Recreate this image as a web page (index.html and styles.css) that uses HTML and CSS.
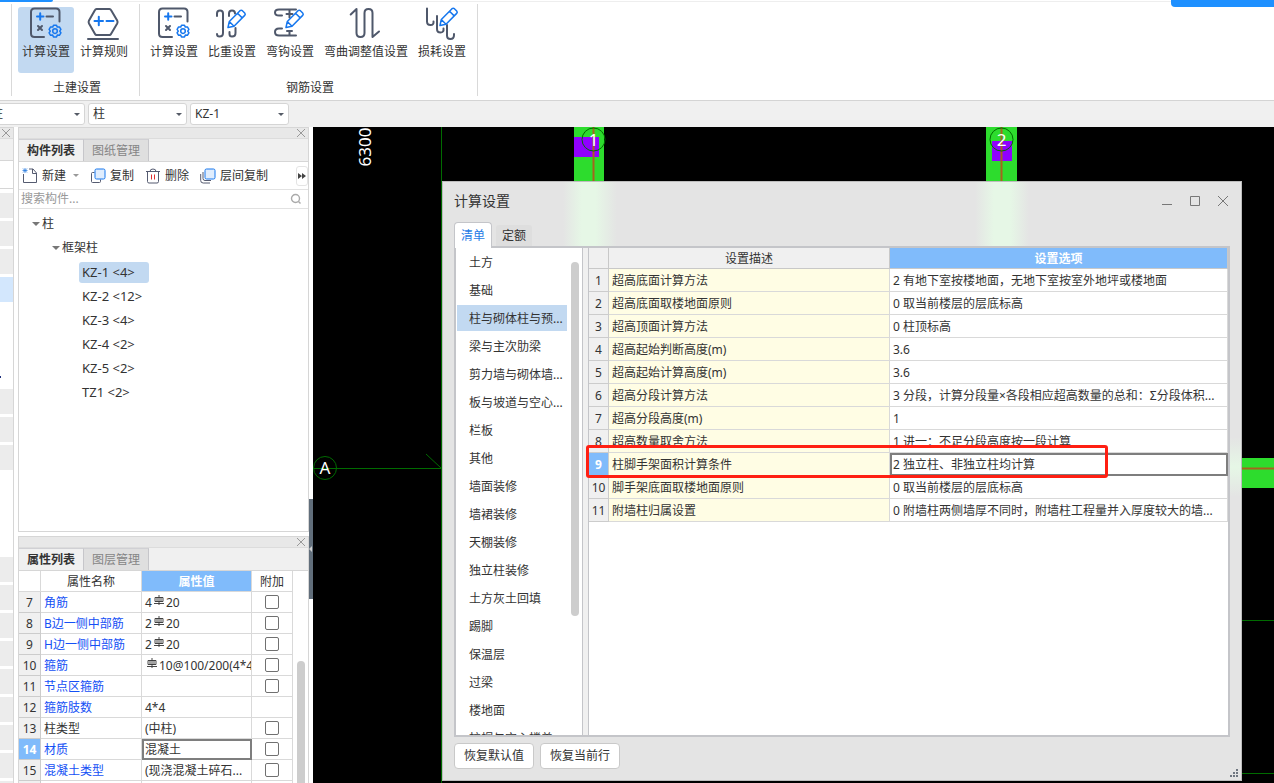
FILE: index.html
```html
<!DOCTYPE html>
<html lang="zh-CN">
<head>
<meta charset="utf-8">
<title>计算设置</title>
<link rel="stylesheet" href="styles.css">
</head>
<body>
<svg class="defs" aria-hidden="true">
  <symbol id="pencil" viewBox="0 0 32 34">
    <path class="pen" d="M12 20.500l1.300-6L24 3.700q1.200-1 2.400 0l2.300 2.300q1.100 1.200 0 2.400L18 19.200zM21.500 6.200l4.700 4.700M13.300 14.500l4.700 4.700"/>
  </symbol>
  <symbol id="calc" viewBox="0 0 32 34">
    <path class="dark" d="M29.500 14.500V5q0-3.500-3.500-3.500H4.500Q1 1.500 1 5v21.500Q1 30 4.500 30H14"/>
    <path class="dark" d="M16.500 9.500H23M8 19l4 4M12 19l-4 4"/>
    <path class="blue" d="M7 9.500h6.500M10.200 6.200v6.600"/>
    <path class="pen" d="M23.500 18.200h3l.8 1.900 2.100-.2 1.500 2.500-1.200 1.700 1.200 1.700-1.500 2.500-2.100-.2-.8 1.900h-3l-.8-1.900-2.100.2-1.500-2.500 1.200-1.700-1.200-1.700 1.500-2.500 2.100.2z"/>
    <circle class="pen" cx="25" cy="24.100" r="2.300"/>
  </symbol>
</svg>

<header class="ribbon">
  <span class="edge-left"></span><span class="edge-right"></span>
  <section class="group stub"></section>
  <section class="group">
    <div class="tools">
      <button class="tool active"><svg class="big"><use href="#calc"/></svg>计算设置</button>
      <button class="tool"><svg class="big" viewBox="0 0 32 34">
        <path class="dark" d="M8.500 2h13q1 0 1.500 1l6.200 10.500q.8 1.500 0 3L23 27q-.5 1-1.500 1h-13Q7.500 28 7 27L1 16.500q-.8-1.500 0-3L7 3q.5-1 1.500-1zM0 32h30"/>
        <path class="blue" d="M6.500 14h8.500M10.800 9.700v8.600M18.500 14h7"/></svg>计算规则</button>
    </div>
    <h2>土建设置</h2>
  </section>
  <section class="group">
    <div class="tools">
      <button class="tool"><svg class="big"><use href="#calc"/></svg>计算设置</button>
      <button class="tool"><svg class="big" viewBox="0 0 32 34">
        <path class="dark" d="M1 9V6.500q0-3 3-3t3 3V26q0 3.500-3.500 3.500Q1 29.500 1 27M13 9V6.500q0-3 3-3t3 3M19.500 21v5q0 3.500-3.500 3.500-2.500 0-2.500-2.500v-2"/>
        <use href="#pencil"/></svg>比重设置</button>
      <button class="tool"><svg class="big" viewBox="0 0 32 34">
        <path class="dark" d="M22 2.500H5Q1 2.500 1 5.500t4 3h3M15.500 2.500v8M12.500 7h6M8 21.500H5q-4 0-4 3.500t4 3.500h17M15.500 24.500v4M13 24h5"/>
        <use href="#pencil"/></svg>弯钩设置</button>
      <button class="tool wide"><svg class="big" viewBox="0 0 32 34">
        <path class="dark" d="M.700 7.500L6.500 2v24q0 4 4 4t4-4V6q0-4 4-4t4 4v24l6.500-5.500"/></svg>弯曲调整值设置</button>
      <button class="tool"><svg class="big" viewBox="0 0 32 34">
        <path class="dark" d="M1 1.500v13Q1 18 4.500 18T7.500 14.500M11 9v13q0 3.500 3.500 3.500t3-4M21 18v10.500q0 3.500 3.500 3.500t3.500-4v-1"/>
        <use href="#pencil" x="2" y="-2" width="32" height="34"/></svg>损耗设置</button>
    </div>
    <h2>钢筋设置</h2>
  </section>
</header>

<nav class="selectors">
  <label class="pick"><select aria-label="楼层类型"><option>柱</option></select></label>
  <label class="pick"><select aria-label="构件类型"><option>柱</option></select></label>
  <label class="pick"><select aria-label="构件"><option>KZ-1</option></select></label>
</nav>

<main class="work">
  <aside class="strip">
    <div class="bar"><button class="x" aria-label="关闭"></button></div>
    <div class="strip-tab"></div><div class="strip-tools"></div>
    <div class="cells"><i></i><i></i><i></i><i class="on"></i><i class="none"></i><i class="none"></i><i class="none dot"></i><i></i><i></i><i></i><i class="none"></i><i class="none"></i><i class="none"></i><i></i><i></i><i></i><i></i><i></i><i></i><i></i><i></i><i></i></div>
  </aside>

  <div class="docks">
    <section class="panel components">
      <div class="bar"><button class="x" aria-label="关闭"></button></div>
      <div class="tabs"><button class="tab on">构件列表</button><button class="tab">图纸管理</button></div>
      <div class="actions">
        <button><svg class="small" viewBox="0 0 16 16"><path class="line" d="M1.500 6v8.500h13V5l-3.500-4H7M10.500 1v4.500h4"/><path class="hatch" d="M1 .500l4 4M5 .500l-4 4M3 0v5M.500 2.500h5"/></svg>新建<span class="caret"></span></button>
        <button><svg class="small" viewBox="0 0 16 16"><path class="line" d="M4.500 4.500h-2q-1 0-1 1v8q0 1 1 1h7q1 0 1-1v-2"/><rect class="sheet" x="5" y="1" width="10" height="10" rx="1.500"/></svg>复制</button>
        <button><svg class="small" viewBox="0 0 16 16"><path class="line" d="M1 3.500h14M5 3.500q0-2.500 3-2.500t3 2.500M2.500 3.500v10q0 1.500 1.500 1.500h8q1.500 0 1.500-1.500v-10"/><path class="red" d="M6.500 6.500v5M9.500 6.500v5"/></svg>删除</button>
        <button><svg class="small" viewBox="0 0 16 16"><path class="line" d="M.700 6v6.500q0 2.500 2.500 2.500H10M3 4v6.500q0 2 2 2h6"/><rect class="sheet" x="5" y="1" width="10" height="10" rx="1.500"/></svg>层间复制</button>
        <button class="more" aria-label="更多"><svg viewBox="0 0 8 6"><path d="M0 0l4 3-4 3zM4 0l4 3-4 3z"/></svg></button>
      </div>
      <div class="search"><input type="text" aria-label="搜索构件" placeholder="搜索构件..."><svg viewBox="0 0 12 12"><circle cx="5.500" cy="5.500" r="4"/><path d="M8.500 8.500l2 2"/></svg></div>
      <ul class="tree">
        <li class="l1"><span class="caret"></span>柱</li>
        <li class="l2"><span class="caret"></span>框架柱</li>
        <li class="l3 on"><span>KZ-1 &lt;4&gt;</span></li>
        <li class="l3"><span>KZ-2 &lt;12&gt;</span></li>
        <li class="l3"><span>KZ-3 &lt;4&gt;</span></li>
        <li class="l3"><span>KZ-4 &lt;2&gt;</span></li>
        <li class="l3"><span>KZ-5 &lt;2&gt;</span></li>
        <li class="l3"><span>TZ1 &lt;2&gt;</span></li>
      </ul>
    </section>

    <section class="panel props">
      <svg class="defs" aria-hidden="true"><symbol id="rebar" viewBox="0 0 10 11"><path d="M5 0v10M1 2.500h8v4h-8zM0 8.500h10M3 2.500v4M7 2.500v4"/></symbol></svg>
      <div class="bar"><button class="x" aria-label="关闭"></button></div>
      <div class="tabs"><button class="tab on">属性列表</button><button class="tab">图层管理</button></div>
      <div class="grid-area">
        <table class="prop-table">
          <colgroup><col class="c-num"><col><col class="c-val"><col class="c-add"></colgroup>
          <thead><tr><th></th><th>属性名称</th><th class="hot">属性值</th><th>附加</th></tr></thead>
          <tbody>
            <tr><th>7</th><td class="key">角筋</td><td>4<svg class="rebar"><use href="#rebar"/></svg>20</td><td><input type="checkbox" aria-label="角筋 附加"></td></tr>
            <tr><th>8</th><td class="key">B边一侧中部筋</td><td>2<svg class="rebar"><use href="#rebar"/></svg>20</td><td><input type="checkbox" aria-label="B边 附加"></td></tr>
            <tr><th>9</th><td class="key">H边一侧中部筋</td><td>2<svg class="rebar"><use href="#rebar"/></svg>20</td><td><input type="checkbox" aria-label="H边 附加"></td></tr>
            <tr><th>10</th><td class="key">箍筋</td><td class="flush"><svg class="rebar"><use href="#rebar"/></svg>10@100/200(4*4</td><td><input type="checkbox" aria-label="箍筋 附加"></td></tr>
            <tr><th>11</th><td class="key">节点区箍筋</td><td></td><td><input type="checkbox" aria-label="节点区箍筋 附加"></td></tr>
            <tr><th>12</th><td class="key">箍筋肢数</td><td>4*4</td><td></td></tr>
            <tr><th>13</th><td>柱类型</td><td>(中柱)</td><td><input type="checkbox" aria-label="柱类型 附加"></td></tr>
            <tr><th class="hot">14</th><td class="key">材质</td><td class="focus">混凝土</td><td><input type="checkbox" aria-label="材质 附加"></td></tr>
            <tr><th>15</th><td class="key">混凝土类型</td><td>(现浇混凝土碎石...</td><td><input type="checkbox" aria-label="混凝土类型 附加"></td></tr>
            <tr><th></th><td></td><td></td><td></td></tr>
          </tbody>
        </table>
        <div class="gutter"><span class="thumb"></span></div>
      </div>
    </section>
  </div>
  <div class="splitter"><button class="collapse" aria-label="收起"></button></div>

  <section class="canvas">
    <svg class="drawing">
      <rect class="beam" x="261" y="0" width="30" height="60"/>
      <rect class="beam" x="673" y="0" width="31" height="60"/>
      <rect class="beam" x="900" y="331" width="100%" height="30"/>
      <rect class="column" x="261" y="10" width="25" height="20"/>
      <rect class="column" x="679" y="14" width="20" height="20"/>
      <path class="core" d="M280.500 0v60M688.500 0v60M900 341.500h1200"/>
      <path class="axis" d="M128.500 0v656M0 341.500h128M113 327l15 14M900 493.500h1200M900 646.500h1200"/>
      <circle class="axis" cx="12" cy="341" r="11.500"/>
      <circle class="axis" cx="280.500" cy="12.500" r="11.500"/>
      <circle class="axis" cx="688.500" cy="12.500" r="11.500"/>
      <text class="mark" x="12" y="347">A</text>
      <text class="mark" x="280.500" y="19">1</text>
      <text class="mark" x="688.500" y="19">2</text>
      <text class="mark" transform="translate(58 20) rotate(-90)">6300</text>
    </svg>

    <div class="dialog" role="dialog" aria-label="计算设置">
      <div class="titlebar">
        <h1>计算设置</h1>
        <button aria-label="最小化"><svg viewBox="0 0 12 12"><path d="M1 9.500h10"/></svg></button>
        <button aria-label="最大化"><svg viewBox="0 0 12 12"><path d="M1.500 1.500h9v9h-9z"/></svg></button>
        <button aria-label="关闭"><svg viewBox="0 0 12 12"><path d="M1 1l10 10M11 1L1 11"/></svg></button>
      </div>
      <div class="dtabs"><button class="on">清单</button><button>定额</button></div>
      <div class="content">
        <div class="side">
          <ul>
            <li>土方</li><li>基础</li><li class="on">柱与砌体柱与预...</li><li>梁与主次肋梁</li><li>剪力墙与砌体墙...</li><li>板与坡道与空心...</li><li>栏板</li><li>其他</li><li>墙面装修</li><li>墙裙装修</li><li>天棚装修</li><li>独立柱装修</li><li>土方灰土回填</li><li>踢脚</li><li>保温层</li><li>过梁</li><li>楼地面</li><li>柱帽与空心楼盖</li>
          </ul>
          <span class="thumb"></span>
        </div>
        <div class="sheet-area">
          <table class="rule-table">
            <colgroup><col class="r-num"><col class="r-desc"><col></colgroup>
            <thead><tr><th></th><th>设置描述</th><th class="hot">设置选项</th></tr></thead>
            <tbody>
              <tr><th>1</th><td>超高底面计算方法</td><td>2 有地下室按楼地面，无地下室按室外地坪或楼地面</td></tr>
              <tr><th>2</th><td>超高底面取楼地面原则</td><td>0 取当前楼层的层底标高</td></tr>
              <tr><th>3</th><td>超高顶面计算方法</td><td>0 柱顶标高</td></tr>
              <tr><th>4</th><td>超高起始判断高度(m)</td><td>3.6</td></tr>
              <tr><th>5</th><td>超高起始计算高度(m)</td><td>3.6</td></tr>
              <tr><th>6</th><td>超高分段计算方法</td><td>3 分段，计算分段量×各段相应超高数量的总和：Σ分段体积...</td></tr>
              <tr><th>7</th><td>超高分段高度(m)</td><td>1</td></tr>
              <tr><th>8</th><td>超高数量取舍方法</td><td>1 进一：不足分段高度按一段计算</td></tr>
              <tr class="marked"><th class="hot">9<span class="highlight"></span></th><td>柱脚手架面积计算条件</td><td class="focus">2 独立柱、非独立柱均计算</td></tr>
              <tr><th>10</th><td>脚手架底面取楼地面原则</td><td>0 取当前楼层的层底标高</td></tr>
              <tr><th>11</th><td>附墙柱归属设置</td><td>0 附墙柱两侧墙厚不同时，附墙柱工程量并入厚度较大的墙...</td></tr>
            </tbody>
          </table>
        </div>
      </div>
      <div class="footer">
        <button>恢复默认值</button><button>恢复当前行</button>
        <svg class="grip" viewBox="0 0 9 9"><path d="M6 0h2v2H6zM3 3h2v2H3zM6 3h2v2H6zM0 6h2v2H0zM3 6h2v2H3zM6 6h2v2H6z"/></svg>
      </div>
    </div>
  </section>
</main>
</body>
</html>
```
FILE: styles.css
```css
* { box-sizing: border-box; }
body {
  margin: 0;
  height: 100vh;
  overflow: hidden;
  display: flex;
  flex-direction: column;
  background: #f0f0f0;
  color: #333;
  font: 12px/18px "Noto Sans", "Noto Sans CJK SC", sans-serif;
}
button, input, select { font: inherit; color: inherit; margin: 0; padding: 0; border: 0; background: none; border-radius: 0; }
h1, h2, ul { margin: 0; padding: 0; font-weight: normal; list-style: none; }
.defs { position: absolute; width: 0; height: 0; }

/* ribbon */
.ribbon {
  position: relative;
  flex: none;
  display: flex;
  padding: 4px 0;
  background: linear-gradient(#eee 0 0) 0 1px / 100% 1px no-repeat #fff;
  border-bottom: 1px solid #d4d4d4;
}
.edge-left, .edge-right { position: absolute; top: 0; background: #1e90ff; }
.edge-left { left: 0; width: 53px; height: 2px; border-bottom-right-radius: 3px; }
.edge-right { right: 0; width: 103px; height: 7px; border-bottom-left-radius: 4px; }
.group { padding: 3px 7px 0 6px; border-right: 1px solid #d9d9d9; }
.stub { width: 12px; padding: 0; }
.group h2 { font-size: 12px; line-height: 16px; text-align: center; margin-top: 7px; padding-left: 4px; }
.tools { display: flex; gap: 2px; }
.tool {
  width: 56px;
  height: 66px;
  display: flex;
  flex-direction: column;
  align-items: center;
  gap: 2px;
  white-space: nowrap;
  border-radius: 3px;
}
.tool.wide { width: 92px; }
.tool.active { background: #c2d9f1; }
.big { width: 32px; height: 34px; overflow: visible; flex: none; }
.dark, .blue, .pen { fill: none; stroke-width: 2; stroke-linecap: round; stroke-linejoin: round; }
.dark { stroke: #4f586b; }
.blue { stroke: #1677ee; }
.pen { stroke: #1677ee; stroke-width: 1.5; }
#pencil .pen { fill: #fff; }

/* selector bar */
.selectors { flex: none; display: flex; gap: 3px; padding: 2px 0; margin-left: -14px; }
.pick { position: relative; width: 99px; }
.pick select {
  display: block;
  appearance: none;
  width: 100%;
  height: 22px;
  padding: 0 4px;
  border: 1px solid #d5d5d5;
  border-radius: 3px;
  background: #fff;
}
.pick::after {
  content: "";
  position: absolute;
  right: 5px;
  top: 10px;
  border: 3px solid transparent;
  border-top-color: #555b66;
  border-bottom: 0;
}

/* docked panels */
.work { flex: 1; min-height: 0; display: flex; background: #fff; }
.bar { flex: none; height: 11px; display: flex; justify-content: flex-end; align-items: center; background: #e8e8e8; border-bottom: 1px solid #dcdcdc; padding-right: 3px; }
.x { width: 8px; height: 8px; background: linear-gradient(45deg, transparent 44%, #999 44% 56%, transparent 56%), linear-gradient(-45deg, transparent 44%, #999 44% 56%, transparent 56%); }
.strip { flex: none; width: 14px; border: solid #d6d6d6; border-width: 1px 1px 0 0; overflow: hidden; }
.strip-tab { height: 22px; background: #f0f0f0; border-bottom: 1px solid #d6d6d6; }
.strip-tools { height: 28px; border-bottom: 1px solid #d6d6d6; }
.cells { display: grid; grid-auto-rows: 25px; gap: 3px; padding-top: 4px; }
.cells i { background: #ececec; }
.cells .on { background: #d3e7fd; }
.cells .none { background: none; }
.cells .dot { background: linear-gradient(#1d2f7c 0 0) 0 15px / 1px 2px no-repeat; }
.docks { flex: none; width: 291px; margin-left: 4px; display: flex; flex-direction: column; gap: 4px; }
.panel { min-height: 0; display: flex; flex-direction: column; border: 1px solid #d6d6d6; overflow: hidden; }
.components { flex: 405 0 0; }
.props { flex: 247 0 0; border-bottom: 0; }
.tabs { flex: none; display: flex; background: #f0f0f0; border-bottom: 1px solid #d6d6d6; }
.tab { width: 65px; height: 22px; border-right: 1px solid #c6c6ca; border-top: 1px solid #d0d0d4; background: #dfdfdf; color: #858585; }
.tab.on { background: #f0f0f0; color: #333; font-weight: bold; }
.actions { flex: none; height: 28px; display: flex; align-items: center; gap: 11px; padding-left: 3px; border-bottom: 1px solid #e2e2e2; }
.actions button { display: flex; align-items: center; gap: 4px; white-space: nowrap; }
.small { width: 16px; height: 16px; }
.line, .red, .hatch { fill: none; stroke: #555b70; }
.red { stroke: #e03030; }
.hatch { stroke: #2d7fe0; stroke-width: .8; }
.sheet { fill: #e0edfd; stroke: #1677ee; }
.caret { border: 3px solid transparent; border-top: 4px solid #777; border-bottom: 0; }
.actions .caret { margin-left: 3px; border-top: 3px solid #999; }
.actions .more { margin-left: auto; width: 12px; height: 20px; justify-content: center; border: 1px solid #e4e4e4; border-radius: 3px; flex: none; }
.more svg { width: 8px; height: 6px; fill: #444; }
.search { flex: none; display: flex; align-items: center; height: 19px; padding: 0 6px 0 2px; border-bottom: 1px solid #e2e2e2; }
.search input { flex: 1; min-width: 0; outline: 0; height: 18px; }
.search input::placeholder { color: #999; opacity: 1; }
.search svg { width: 12px; height: 12px; fill: none; stroke: #aaa; stroke-width: 1.4; }
.tree { padding-top: 3px; }
.tree li { display: flex; align-items: center; height: 24px; gap: 2px; }
.tree .l1 { padding-left: 13px; }
.tree .l2 { padding-left: 33px; }
.tree .caret { border-width: 4px 4px 0; }
.tree .l3 { padding-left: 60px; font-size: 13px; }
.l3 span { padding: 1px 3px 2px; border-radius: 3px; }
.l3.on span { background: #c2d9f1; width: 70px; }

/* tables */
table { border-spacing: 0; table-layout: fixed; width: 100%; }
th, td { padding: 2px 3px 0; border: solid #d9d9d9; border-width: 0 1px 1px 0; white-space: nowrap; overflow: hidden; font-weight: normal; text-align: left; }
thead th, tbody th { text-align: center; }
tbody th { padding: 2px 0 0; background: #f0f0f0; border-color: #ccc; }
th.hot { background: #80bbfb; color: #fff; font-weight: bold; }
td.focus { border: 2px solid #7e7e7e; padding: 1px 1px 0; }
.grid-area { flex: 1; min-height: 0; display: flex; align-items: stretch; overflow: hidden; }
.prop-table { flex: 1; align-self: flex-start; width: 274px; }
.prop-table th, .prop-table td { height: 21px; line-height: 18px; }
.prop-table td.focus { line-height: 16px; }
.prop-table td.flush { padding-right: 0; }
.c-num { width: 22px; }
.c-val { width: 110px; }
.c-add { width: 41px; }
.prop-table .key { color: #1450f5; }
.prop-table td:last-child { text-align: center; padding-top: 0; }
.prop-table input { appearance: none; display: block; width: 14px; height: 14px; margin: 0 auto; border: 1px solid #707070; border-radius: 2px; background: #fff; }
.rebar { width: 10px; height: 11px; margin: 0 2px; vertical-align: 1px; fill: none; stroke: #333; stroke-width: .9; }
.gutter { flex: none; width: 15px; display: flex; justify-content: center; padding-top: 90px; }
.thumb { width: 8px; border-radius: 4px; background: #cdcdcd; }
.gutter .thumb { border-radius: 4px 4px 0 0; }
.splitter { flex: none; width: 4px; display: flex; flex-direction: column; justify-content: center; padding-top: 188px; }
.collapse { height: 100px; background: #616e7b; display: flex; align-items: center; }
.collapse::before { content: ""; border: 3px solid transparent; border-right-color: #ccc; border-left: 0; }

/* drawing area */
.canvas { flex: 1; min-width: 0; position: relative; background: #000; overflow: hidden; }
.drawing { display: block; width: 100%; height: 100%; }
.beam { fill: #2ddc2d; }
.column { fill: #9000ff; }
.core { stroke: #a5641e; stroke-width: 2; }
.axis { fill: none; stroke: #006b00; }
.mark { fill: #fff; font-size: 17px; text-anchor: middle; }

/* settings window */
.dialog {
  position: absolute;
  left: 129px;
  right: 32px;
  top: 54px;
  bottom: 2px;
  display: flex;
  flex-direction: column;
  padding: 0 11px;
  border: 1px solid #bdbdbd;
  background:
    linear-gradient(90deg, transparent, #e6f7e6 35%, #e6f7e6 60%, transparent) 120px 0 / 54px 66px no-repeat,
    linear-gradient(90deg, transparent, #e6f7e6 35%, #e6f7e6 65%, transparent) 532px 0 / 54px 66px no-repeat,
    linear-gradient(transparent, #e6f7e6, transparent) 100% 255px / 12px 60px no-repeat,
    #e4e4e4;
}
.titlebar { flex: none; height: 40px; display: flex; align-items: center; gap: 16px; padding: 0 1px 2px 0; }
.titlebar h1 { flex: 1; font-size: 14px; line-height: 20px; }
.titlebar svg { display: block; width: 12px; height: 12px; fill: none; stroke: #777; }
.dtabs { flex: none; display: flex; align-items: flex-end; gap: 4px; height: 24px; }
.dtabs button { width: 36px; height: 21px; background: #dedede; border-radius: 3px 3px 0 0; }
.dtabs .on { width: 38px; height: 26px; margin-bottom: -2px; background: #fff; border: 1px solid #c4c5c9; border-bottom: 0; border-radius: 4px 4px 0 0; color: #1f7ce6; z-index: 1; }
.content { flex: 1; min-height: 0; display: flex; gap: 5px; border: 2px solid #c4c5c9; background: #f0f0f0; }
.side { position: relative; flex: none; width: 127px; overflow: hidden; background: #fff; border-right: 1px solid #c4c5c9; }
.side ul { padding: 1px 15px 0 1px; }
.side li { height: 26px; line-height: 24px; margin-bottom: 2px; padding: 2px 0 0 12px; white-space: nowrap; }
.side .on { background: #c2d9f1; }
.side .thumb { position: absolute; right: 3px; top: 14px; height: 354px; }
.sheet-area { flex: 1; min-width: 0; background: #fff; border-left: 1px solid #c4c5c9; }
.rule-table th, .rule-table td { height: 23px; line-height: 20px; }
.rule-table thead th { height: 21px; line-height: 18px; background: #f0f0f0; border-color: #c8c8c8; }
.rule-table thead th.hot { background: #80bbfb; }
.rule-table td:nth-child(2) { background: #fffde4; }
.rule-table td.focus { line-height: 18px; }
.r-num { width: 20px; }
.r-desc { width: 281px; }
.marked th { position: relative; overflow: visible; }
.highlight { position: absolute; left: -3px; top: -8px; width: 522px; height: 33px; border: 3px solid #ff1f12; border-radius: 3px; z-index: 2; }
.footer { position: relative; flex: none; display: flex; gap: 6px; padding: 6px 0 11px; }
.footer button { width: 80px; height: 26px; background: #fff; border: 1px solid #c9c9c9; border-radius: 4px; }
.grip { position: absolute; right: -9px; bottom: 2px; width: 9px; height: 9px; fill: #6f7680; }
```
